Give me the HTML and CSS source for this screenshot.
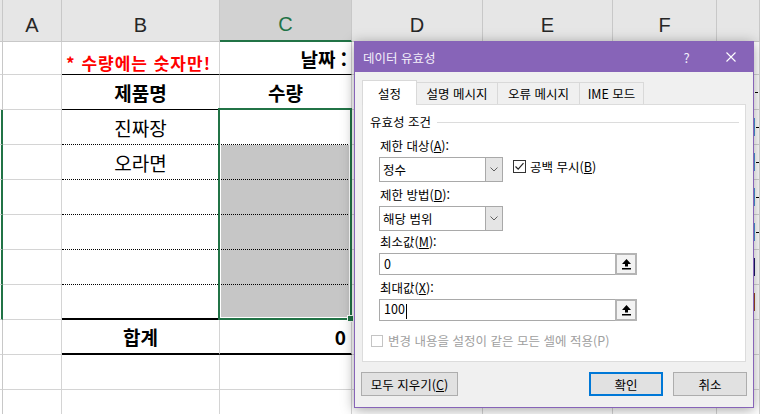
FILE: index.html
```html
<!DOCTYPE html>
<html lang="ko">
<head>
    <meta charset="UTF-8">
    <meta name="viewport" content="width=device-width, initial-scale=1.0">
    <title>데이터 유효성</title>
    <link rel="stylesheet" href="styles.css">
</head>
<body>
    <div class="sheet">
        <div class="row head">
            <div class="rh"></div><div>A</div><div>B</div><div class="cur">C</div><div>D</div><div>E</div><div>F</div><div></div>
        </div>
        <div class="row r1">
            <div class="rh"></div><div></div>
            <div class="note b-thin">* 수량에는 숫자만!</div>
            <div class="bold right b-thin">날짜 :</div>
            <div></div><div></div><div></div><div></div>
        </div>
        <div class="row">
            <div class="rh"></div><div></div>
            <div class="bold b-thin">제품명</div>
            <div class="bold b-thin">수량</div>
            <div></div><div></div><div></div><div class="g"><i class="dash"></i></div>
        </div>
        <div class="row">
            <div class="rh on"></div><div></div>
            <div class="b-dot">진짜장</div>
            <div class="b-dot"></div>
            <div></div><div></div><div></div><div class="g"><i class="bar"></i><i class="dash"></i></div>
        </div>
        <div class="row">
            <div class="rh on"></div><div></div>
            <div class="b-dot">오라면</div>
            <div class="b-dot sel"></div>
            <div></div><div></div><div></div><div class="g"><i class="bar"></i><i class="dash"></i></div>
        </div>
        <div class="row">
            <div class="rh on"></div><div></div>
            <div class="b-dot"></div>
            <div class="b-dot sel"></div>
            <div></div><div></div><div></div><div class="g"><i class="bar"></i><i class="dash"></i></div>
        </div>
        <div class="row">
            <div class="rh on"></div><div></div>
            <div class="b-dot"></div>
            <div class="b-dot sel"></div>
            <div></div><div></div><div></div><div class="g"><i class="bar"></i><i class="dash"></i></div>
        </div>
        <div class="row">
            <div class="rh on"></div><div></div>
            <div class="b-dot"></div>
            <div class="b-dot sel"></div>
            <div></div><div></div><div></div><div class="g"><i class="bar navy"></i></div>
        </div>
        <div class="row">
            <div class="rh on"></div><div></div>
            <div class="b-thick"></div>
            <div class="b-thick sel"></div>
            <div></div><div></div><div></div><div class="g"><i class="bar brown"></i></div>
        </div>
        <div class="row">
            <div class="rh"></div><div></div>
            <div class="bold b-thick">합계</div>
            <div class="bold right b-thick sum">0</div>
            <div></div><div></div><div></div><div></div>
        </div>
        <div class="row">
            <div class="rh"></div><div></div><div></div><div></div><div></div><div></div><div></div><div></div>
        </div>
        <div class="row">
            <div class="rh"></div><div></div><div></div><div></div><div></div><div></div><div></div><div></div>
        </div>

        <!-- 선택 영역 C3:C8 -->
        <div class="selection"></div>
        <div class="handle"></div>
    </div>

    <div class="dialog">
        <div class="titlebar">
            <span class="title">데이터 유효성</span>
            <span class="help">?</span>
            <span class="close">
                <svg width="10" height="10" viewBox="0 0 10 10"><path d="M0.5 0.5 L9.5 9.5 M9.5 0.5 L0.5 9.5" stroke="#fff" stroke-width="1.1" fill="none"/></svg>
            </span>
        </div>
        <div class="body">
            <div class="tabs">
                <div class="tab on w1">설정</div>
                <div class="tab w2">설명 메시지</div>
                <div class="tab w3">오류 메시지</div>
                <div class="tab w4">IME 모드</div>
            </div>
            <div class="panel">
                <div class="legend">유효성 조건</div>
                <div class="fields">
                    <div class="lbl first">제한 대상(<u>A</u>):</div>
                    <div class="line">
                        <div class="combo">
                            <span>정수</span>
                            <div class="drop"><svg width="8" height="5" viewBox="0 0 8 5"><path d="M0.5 0.5 L4 4 L7.5 0.5" stroke="#606060" fill="none"/></svg></div>
                        </div>
                        <div class="check">
                            <div class="box"><svg width="11" height="11" viewBox="0 0 11 11"><path d="M1.5 5.5 L4.2 8.2 L9.5 2.2" stroke="#222" stroke-width="1.2" fill="none"/></svg></div>
                            <span>공백 무시(<u>B</u>)</span>
                        </div>
                    </div>
                    <div class="lbl">제한 방법(<u>D</u>):</div>
                    <div class="combo">
                        <span>해당 범위</span>
                        <div class="drop"><svg width="8" height="5" viewBox="0 0 8 5"><path d="M0.5 0.5 L4 4 L7.5 0.5" stroke="#606060" fill="none"/></svg></div>
                    </div>
                    <div class="lbl tight">최소값(<u>M</u>):</div>
                    <div class="input">
                        <span>0</span>
                        <div class="upbtn"><svg width="11" height="12" viewBox="0 0 11 12"><path d="M5.5 1 L10 6 H7 V8.5 H4 V6 H1 Z" fill="#000"/><rect x="1" y="10" width="9" height="1.5" fill="#000"/></svg></div>
                    </div>
                    <div class="lbl">최대값(<u>X</u>):</div>
                    <div class="input">
                        <span>100<i class="caret"></i></span>
                        <div class="upbtn"><svg width="11" height="12" viewBox="0 0 11 12"><path d="M5.5 1 L10 6 H7 V8.5 H4 V6 H1 Z" fill="#000"/><rect x="1" y="10" width="9" height="1.5" fill="#000"/></svg></div>
                    </div>
                </div>
                <div class="apply">
                    <div class="box off"></div>
                    <span>변경 내용을 설정이 같은 모든 셀에 적용(P)</span>
                </div>
            </div>
            <div class="buttons">
                <div class="btn clear">모두 지우기(<u>C</u>)</div>
                <div class="btn ok">확인</div>
                <div class="btn cancel">취소</div>
            </div>
        </div>
    </div>
</body>
</html>
```

FILE: styles.css
```css
* {
    margin: 0;
    padding: 0;
}

body {
    font-family: "Noto Sans CJK KR", "Noto Sans", sans-serif;
    background-color: #fff;
    overflow: hidden;
}

/* 시트 */
.sheet {
    position: relative;
    width: 760px;
    height: 414px;
    overflow: hidden;
}

.row {
    display: grid;
    grid-template-columns: 3px 59px 158px 132px 131px 130px 104px 1fr;
    height: 35px;
}

.row > div {
    box-sizing: border-box;
    border-right: 1px solid #d4d4d4;
    border-bottom: 1px solid #d4d4d4;
    display: flex;
    align-items: center;
    justify-content: center;
    font-size: 19px;
    line-height: 1;
    color: #000;
}

.head {
    height: 42px;
    background-color: #e6e6e6;
}

.head > div {
    padding-top: 8px;
    border-right-color: #c8c8c8;
    border-bottom-color: #c8c8c8;
    font-family: "Liberation Sans", sans-serif;
    font-size: 20px;
    color: #262626;
}

.head > .cur {
    background-color: #d2d2d2;
    color: #217346;
    border-bottom: 2px solid #217346;
}

.r1 {
    height: 33px;
}

.rh {
    border-right-color: #c8c8c8 !important;
}

.rh.on {
    border-right: 2px solid #217346 !important;
}

.bold {
    font-weight: bold;
}

.right {
    justify-content: flex-end !important;
    padding-right: 4px;
}

.sum {
    padding-right: 5px;
}

.row > .note {
    color: #ff0000;
    font-weight: bold;
    font-size: 17px;
    letter-spacing: 1px;
    align-items: flex-end;
    padding-bottom: 3px;
    padding-right: 4px;
}

.b-thin {
    border-bottom: 1px solid #000 !important;
}

.b-dot {
    border-bottom: 1px dotted #000 !important;
}

.b-thick {
    border-bottom: 2px solid #000 !important;
}

.sel {
    background-color: #c6c6c6;
}

.g {
    justify-content: flex-start !important;
}

.bar {
    width: 2px;
    height: 18px;
    margin-left: 36px;
    background-color: #4a9bd9;
}

.bar.navy {
    background-color: #1b1b66;
}

.bar.brown {
    background-color: #9c4a1e;
}

.dash {
    width: 3px;
    height: 1px;
    margin-left: 1px;
    background-color: #000;
}

.row > .g > .dash:first-child {
    margin-left: 38px;
}

.selection {
    position: absolute;
    left: 218px;
    top: 108px;
    width: 134px;
    height: 212px;
    box-sizing: border-box;
    border: 2px solid #217346;
    box-shadow: inset 0 0 0 1px #fff;
}

.handle {
    position: absolute;
    left: 347px;
    top: 315px;
    width: 5px;
    height: 5px;
    background-color: #217346;
    border: 1px solid #fff;
}

/* 대화 상자 */
.dialog {
    position: absolute;
    left: 354px;
    top: 41px;
    width: 400px;
    height: 367px;
    box-sizing: border-box;
    border: 1px solid #8764b8;
    background-color: #f0f0f0;
    box-shadow: 0 2px 12px rgba(0, 0, 0, 0.35);
    font-size: 12.5px;
    color: #000;
}

.titlebar {
    height: 30px;
    background-color: #8764b8;
    color: #f3effa;
    display: flex;
    align-items: center;
    padding-left: 8px;
}

.titlebar .title {
    flex: 1;
}

.help {
    width: 45px;
    text-align: center;
    font-size: 13px;
}

.close {
    width: 44px;
    height: 30px;
    display: flex;
    align-items: center;
    justify-content: center;
}

.body {
    padding: 8px 7px 0 7px;
}

.tabs {
    display: flex;
    align-items: flex-end;
    height: 25px;
    margin-bottom: -1px;
    position: relative;
    z-index: 1;
}

.tab {
    height: 22px;
    box-sizing: border-box;
    border: 1px solid #d9d9d9;
    border-bottom: none;
    background-color: #f0f0f0;
    margin-bottom: 1px;
    margin-left: -1px;
    display: flex;
    align-items: center;
    justify-content: center;
}

.tab.on {
    height: 25px;
    margin-bottom: 0;
    margin-left: 0;
    background-color: #fff;
    position: relative;
    z-index: 2;
}

.w1 { width: 55px; }
.w2 { width: 82px; }
.w3 { width: 83px; }
.w4 { width: 65px; }

.panel {
    height: 258px;
    box-sizing: border-box;
    border: 1px solid #dcdcdc;
    background-color: #fff;
    padding: 9px 6px 0 7px;
}

.legend {
    display: flex;
    align-items: center;
    line-height: 16px;
}

.legend::after {
    content: "";
    flex: 1;
    border-top: 1px solid #dcdcdc;
    margin-left: 6px;
}

.fields {
    padding-left: 9px;
}

.lbl {
    line-height: 16px;
    padding-left: 1px;
    margin-top: 5px;
    margin-bottom: 3px;
}

.lbl.first {
    margin-top: 8px;
}

.lbl.tight {
    margin-top: 3px;
}

.line {
    display: flex;
    align-items: flex-start;
}

.combo {
    width: 124px;
    height: 25px;
    box-sizing: border-box;
    border: 1px solid #a9a9a9;
    background-color: #fff;
    display: flex;
    align-items: center;
}

.combo span,
.input span {
    padding-left: 3px;
    line-height: 16px;
}

.input span {
    padding-left: 4px;
}

.drop {
    margin-left: auto;
    width: 16px;
    height: 100%;
    border-left: 1px solid #a9a9a9;
    background-color: #e5e5e5;
    display: flex;
    align-items: center;
    justify-content: center;
}

.check {
    display: flex;
    align-items: center;
    margin-left: 10px;
    margin-top: 3px;
    height: 13px;
}

.box {
    width: 13px;
    height: 13px;
    box-sizing: border-box;
    border: 1px solid #333;
    background-color: #fff;
    display: flex;
    align-items: center;
    justify-content: center;
}

.check span {
    margin-left: 4px;
}

.input {
    width: 258px;
    height: 22px;
    box-sizing: border-box;
    border: 1px solid #a9a9a9;
    background-color: #fff;
    display: flex;
    align-items: center;
}

.upbtn {
    margin: -1px -1px -1px auto;
    width: 22px;
    height: 22px;
    box-sizing: border-box;
    border: 2px solid #b4b4b4;
    background-color: #f3f3f3;
    display: flex;
    align-items: center;
    justify-content: center;
}

.caret {
    display: inline-block;
    width: 1px;
    height: 15px;
    background-color: #000;
    vertical-align: middle;
    margin-left: 1px;
}

.apply {
    display: flex;
    align-items: center;
    margin-top: 12px;
    padding-left: 1px;
    color: #a0a0a0;
}

.box.off {
    width: 12px;
    height: 12px;
    border-color: #c4c4c4;
}

.apply span {
    margin-left: 5px;
    line-height: 16px;
}

.buttons {
    display: flex;
    margin-top: 10px;
    margin-left: -1px;
}

.btn {
    height: 24px;
    box-sizing: border-box;
    border: 1px solid #adadad;
    background-color: #e1e1e1;
    display: flex;
    align-items: center;
    justify-content: center;
}

.clear {
    width: 97px;
}

.ok {
    width: 74px;
    margin-left: auto;
    border: 2px solid #0078d7;
}

.cancel {
    width: 74px;
    margin-left: 10px;
    margin-right: -1px;
}
```
